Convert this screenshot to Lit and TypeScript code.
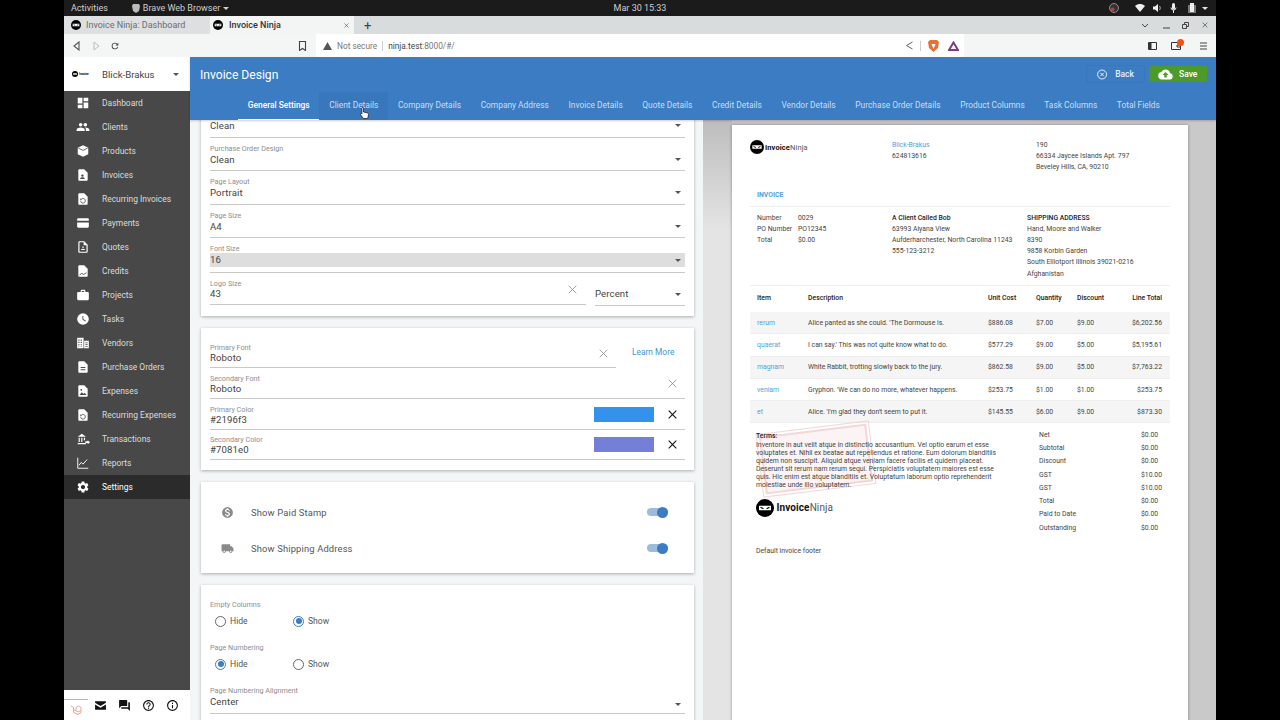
import { LitElement, html, css, svg } from 'lit'
import { customElement } from 'lit/decorators.js'

const FONT = css`Roboto, "Liberation Sans", sans-serif`

const FILE = 'M14 2H6c-1.1 0-2 .9-2 2v16c0 1.1.9 2 2 2h12c1.1 0 2-.9 2-2V8l-6-6z'
const icons: Record<string, unknown> = {
  dashboard: svg`<path d="M3 13h8V3H3v10zm0 8h8v-6H3v6zm10 0h8V11h-8v10zm0-18v6h8V3h-8z"/>`,
  clients: svg`<path d="M16 11c1.66 0 2.99-1.34 2.99-3S17.66 5 16 5c-1.66 0-3 1.34-3 3s1.34 3 3 3zm-8 0c1.66 0 2.99-1.34 2.99-3S9.66 5 8 5C6.34 5 5 6.34 5 8s1.34 3 3 3zm0 2c-2.33 0-7 1.17-7 3.5V19h14v-2.5c0-2.33-4.67-3.5-7-3.5zm8 0c-.29 0-.62.02-.97.05 1.16.84 1.97 1.97 1.97 3.45V19h6v-2.5c0-2.33-4.67-3.5-7-3.5z"/>`,
  products: svg`<path d="M12 2l9 4.5v11L12 22l-9-4.5v-11z"/><path d="M4 7l8 4 8-4" fill="none" stroke="#484848" stroke-width="1.4"/>`,
  invoices: svg`<path d="${FILE}"/><circle cx="11" cy="13" r="2" fill="#484848"/><path d="M7 19c0-2 2-3 4-3s4 1 4 3z" fill="#484848"/>`,
  recurring: svg`<path d="${FILE}"/><path d="M8 15a4 4 0 1 0 1.4-3" fill="none" stroke="#484848" stroke-width="1.5"/><path d="M7.5 10.5v3h3z" fill="#484848"/>`,
  payments: svg`<path d="M2 6c0-1.1.9-2 2-2h16c1.1 0 2 .9 2 2v2H2zM2 11h20v7c0 1.1-.9 2-2 2H4c-1.1 0-2-.9-2-2z"/>`,
  quotes: svg`<path fill-rule="evenodd" d="${FILE}M6 4h7v5h5v11H6z"/><path d="M9 17h6v-1.5H9zM11 14h2v-3h-2z"/>`,
  credits: svg`<path d="${FILE}"/><path d="M6 19l4-3 3 2 5-3" fill="none" stroke="#484848" stroke-width="1.5"/>`,
  projects: svg`<path d="M20 7h-4V5c0-1.1-.9-2-2-2h-4c-1.1 0-2 .9-2 2v2H4c-1.1 0-2 .9-2 2v10c0 1.1.9 2 2 2h16c1.1 0 2-.9 2-2V9c0-1.1-.9-2-2-2zM14 7h-4V5h4z" fill-rule="evenodd"/>`,
  tasks: svg`<path fill-rule="evenodd" d="M12 2a10 10 0 1 0 0 20 10 10 0 0 0 0-20zm4.2 14.2L11 13V7h1.5v5.2l4.5 2.7z"/>`,
  vendors: svg`<path d="M2 3h11v18H2zM14 8h8v13h-8z"/><path d="M4 6h2v2H4zM8 6h2v2H8zM4 10h2v2H4zM8 10h2v2H8zM4 14h2v2H4zM8 14h2v2H8zM4 18h2v1H4zM8 18h2v1H8zM16 11h4v1.5h-4zM16 14h4v1.5h-4zM16 17h4v1.5h-4z" fill="#484848"/>`,
  orders: svg`<path d="${FILE}"/><path d="M8 12h8v1.6H8zM8 16h8v1.6H8z" fill="#484848"/>`,
  expenses: svg`<path d="${FILE}"/><circle cx="9" cy="10" r="1.6" fill="#484848"/><path d="M6 19l4-5 3 3 2-2 3 4z" fill="#484848"/>`,
  transactions: svg`<path d="M3 8l7-5 7 5zM3 19h14v2H3zM4.5 10h2v7h-2zM9 10h2v7H9zM13.500 10h2v4h-2z"/><path d="M16 16h4v-2l4 3.500-4 3.500v-2h-4z"/>`,
  reports: svg`<path fill="none" stroke="#fff" stroke-width="1.6" d="M3 3v18h18"/><path fill="none" stroke="#fff" stroke-width="1.6" d="M5 16l4-5 3 3 7-8"/>`,
  settings: svg`<path d="M19.14 12.94c.04-.3.06-.61.06-.94 0-.32-.02-.64-.07-.94l2.03-1.58c.18-.14.23-.41.12-.61l-1.92-3.32c-.12-.22-.37-.29-.59-.22l-2.39.96c-.5-.38-1.03-.7-1.62-.94l-.36-2.54c-.04-.24-.24-.41-.48-.41h-3.84c-.24 0-.43.17-.47.41l-.36 2.54c-.59.24-1.13.57-1.62.94l-2.39-.96c-.22-.08-.47 0-.59.22L2.74 8.87c-.12.21-.08.47.12.61l2.03 1.58c-.05.3-.09.63-.09.94s.02.64.07.94l-2.03 1.58c-.18.14-.23.41-.12.61l1.92 3.32c.12.22.37.29.59.22l2.39-.96c.5.38 1.03.7 1.62.94l.36 2.54c.05.24.24.41.48.41h3.84c.24 0 .44-.17.47-.41l.36-2.54c.59-.24 1.13-.56 1.62-.94l2.39.96c.22.08.47 0 .59-.22l1.92-3.32c.12-.22.07-.47-.12-.61l-2.01-1.58zM12 15.6c-1.98 0-3.6-1.62-3.6-3.6s1.62-3.6 3.6-3.6 3.6 1.62 3.6 3.6-1.62 3.6-3.6 3.6z"/>`,
  close: svg`<path fill="none" stroke="currentColor" stroke-width="2" d="M5 5l14 14M19 5L5 19"/>`,
  thin: svg`<path fill="none" stroke="currentColor" stroke-width="1.500" d="M5 5l14 14M19 5L5 19"/>`,
  mail: svg`<path d="M2 4h20v3l-10 6L2 7zM2 10l10 6 10-6v10H2z"/>`,
  chat: svg`<path d="M21 6h-2v9H6v2c0 .55.45 1 1 1h11l4 4V7c0-.55-.45-1-1-1zm-4 6V3c0-.55-.45-1-1-1H3c-.55 0-1 .45-1 1v14l4-4h10c.55 0 1-.45 1-1z"/>`,
  help: svg`<path d="M11 18h2v-2h-2v2zm1-16C6.480 2 2 6.480 2 12s4.480 10 10 10 10-4.480 10-10S17.520 2 12 2zm0 18c-4.410 0-8-3.590-8-8s3.590-8 8-8 8 3.590 8 8-3.590 8-8 8zm0-14c-2.210 0-4 1.790-4 4h2c0-1.100.900-2 2-2s2 .9 2 2c0 2-3 1.750-3 5h2c0-2.250 3-2.500 3-5 0-2.210-1.790-4-4-4z"/>`,
  info: svg`<path d="M11 7h2v2h-2zm0 4h2v6h-2zm1-9C6.480 2 2 6.480 2 12s4.480 10 10 10 10-4.480 10-10S17.520 2 12 2zm0 18c-4.410 0-8-3.590-8-8s3.590-8 8-8 8 3.590 8 8-3.590 8-8 8z"/>`,
  dollar: svg`<path fill-rule="evenodd" d="M12 2a10 10 0 1 0 0 20 10 10 0 0 0 0-20zm1.400 16.100V20h-2.700v-1.900c-1.700-.4-3.200-1.500-3.300-3.400h2c.1 1 .8 1.800 2.600 1.800 1.900 0 2.400-1 2.400-1.600 0-.9-.5-1.700-2.800-2.200-2.500-.6-4.200-1.700-4.200-3.800 0-1.700 1.400-2.900 3.300-3.300V4h2.700v1.900c1.900.5 2.800 1.900 2.900 3.300h-2c-.1-1-.6-1.800-2.200-1.800-1.500 0-2.400.7-2.400 1.600 0 .8.700 1.400 2.800 1.900s4.200 1.400 4.200 4c0 1.800-1.400 2.800-3.300 3.200z"/>`,
  truck: svg`<path d="M20 8h-3V4H3c-1.100 0-2 .9-2 2v11h2c0 1.660 1.340 3 3 3s3-1.340 3-3h6c0 1.660 1.340 3 3 3s3-1.340 3-3h2v-5l-3-4zM6 18.500c-.83 0-1.500-.67-1.500-1.500s.67-1.500 1.500-1.500 1.500.67 1.500 1.500-.67 1.500-1.500 1.500zm12 0c-.83 0-1.500-.67-1.500-1.500s.67-1.500 1.500-1.500 1.500.67 1.500 1.500-.67 1.500-1.500 1.500z"/>`,
}

const icon = (name: string, size: number) =>
  html`<svg width=${size} height=${size} viewBox="0 0 24 24" fill="currentColor">${icons[name]}</svg>`

const ninjaMark = (size: number) => html`<svg width=${size} height=${size} viewBox="0 0 24 24">
  <circle cx="12" cy="12" r="12" fill="#000"/>
  <path d="M4 9h16v6H4z" fill="#fff"/>
  <path d="M6 11l4 2M18 11l-4 2" stroke="#000" stroke-width="1.6"/>
</svg>`

@customElement('browser-chrome')
export class BrowserChrome extends LitElement {
  static styles = css`
    :host {
      display: block;
      font-family: ${FONT};
    }
    .panel {
      height: 16px;
      background: #1b1b1b;
      color: #cfcfcf;
      font-size: 9px;
      display: flex;
      align-items: center;
      padding: 0 8px 0 7px;
      position: relative;
    }
    .brave-menu {
      margin-left: 24px;
      display: flex;
      align-items: center;
      gap: 3px;
    }
    .clock {
      position: absolute;
      left: 549px;
      width: 54px;
      text-align: center;
    }
    .tray {
      margin-left: auto;
      display: flex;
      align-items: center;
      gap: 5px;
      color: #e8e8e8;
    }
    .caret {
      width: 0;
      height: 0;
      border: 3px solid transparent;
      border-top: 3px solid currentColor;
      border-bottom: 0;
    }
    .tabs {
      height: 18px;
      background: #d8dcdc;
      display: flex;
      align-items: stretch;
      font-size: 9px;
      color: #6a6e72;
    }
    .tab {
      width: 146px;
      box-sizing: border-box;
      display: flex;
      align-items: center;
      gap: 5px;
      padding-left: 7px;
      background: #dddfe0;
      white-space: nowrap;
    }
    .tab.active {
      width: 144px;
      background: #f3f4f4;
      color: #333;
      font-weight: 500;
      padding-left: 3px;
      gap: 6px;
    }
    .tab.active .x {
      margin-left: auto;
      margin-right: 4px;
      color: #444;
      display: flex;
    }
    .plus {
      margin-left: 10px;
      align-self: center;
      color: #444;
      font-size: 13px;
      line-height: 13px;
    }
    .win {
      margin-left: auto;
      display: flex;
      align-items: center;
      gap: 12px;
      padding-right: 7px;
      color: #444;
    }
    .win .chev {
      margin-right: 2px;
    }
    .bar {
      height: 23px;
      background: #f4f5f5;
      display: flex;
      align-items: center;
      color: #444;
    }
    .nav {
      width: 252px;
      padding-left: 8px;
      box-sizing: border-box;
      display: flex;
      align-items: center;
      gap: 9px;
    }
    .bookmark {
      margin-left: auto;
      margin-right: 9px;
      display: flex;
    }
    .url {
      width: 648px;
      height: 100%;
      box-sizing: border-box;
      background: #fff;
      display: flex;
      align-items: center;
      font-size: 8.300px;
      padding: 0 5px 0 7px;
      color: #777;
    }
    .url .sep {
      width: 1px;
      height: 10px;
      background: #ccc;
      margin: 0 5px;
    }
    .url b {
      font-weight: 400;
      color: #444;
    }
    .url .tools {
      margin-left: auto;
      display: flex;
      align-items: center;
      gap: 6.500px;
    }
    .ext {
      margin-left: auto;
      padding-right: 9.500px;
      display: flex;
      align-items: center;
    }
    .wallet {
      position: relative;
      display: flex;
      margin: 0 18.500px 0 14.500px;
    }
    .dot {
      position: absolute;
      top: -3px;
      right: -3px;
      width: 7px;
      height: 7px;
      border-radius: 50%;
      background: #f4511e;
    }
  `

  render() {
    return html`
      <div class="panel">
        <span>Activities</span>
        <span class="brave-menu">
          <svg width="8" height="9" viewBox="0 0 8 9"><path d="M1 0h6l1 2-1 5-3 2-3-2-1-5z" fill="#bbb"/></svg>
          Brave Web Browser <i class="caret"></i>
        </span>
        <span class="clock">Mar 30 15:33</span>
        <span class="tray">
          <svg width="10" height="10" viewBox="0 0 10 10"><circle cx="5" cy="5" r="4.500" fill="#333" stroke="#bbb" stroke-width=".7"/><circle cx="3.500" cy="6.500" r="2" fill="#c43a3a"/></svg>
          <svg style="margin-left:11px" width="10" height="8" viewBox="0 0 10 8"><path d="M0 2a7 7 0 0 1 10 0L5 8z" fill="#eee"/></svg>
          <svg style="margin-left:3px" width="9" height="8" viewBox="0 0 9 8"><path d="M0 2.500h2L5 0v8L2 5.500H0z" fill="#eee"/><path d="M6.500 2a3 3 0 0 1 0 4" stroke="#aaa" fill="none"/></svg>
          <svg style="margin-left:3px" width="7" height="10" viewBox="0 0 7 10"><rect x="2" width="3" height="6.500" rx="1.500" fill="#eee"/><path d="M1 4.500a2.500 2.500 0 0 0 5 0M3.500 7v3" stroke="#eee" fill="none"/></svg>
          <svg style="margin-left:6px" width="8" height="10" viewBox="0 0 8 10"><path d="M0 2h8v8H0z" fill="#777"/><path d="M2 0h4v9H2z" fill="#eee"/></svg>
          <i class="caret" style="margin-left:1px"></i>
        </span>
      </div>
      <div class="tabs">
        <div class="tab">${ninjaMark(10)} Invoice Ninja: Dashboard</div>
        <div class="tab active">
          ${ninjaMark(10)} Invoice Ninja
          <span class="x">${icon('close', 7)}</span>
        </div>
        <span class="plus">+</span>
        <span class="win">
          <svg class="chev" width="8" height="5" viewBox="0 0 8 5"><path d="M1 1l3 3 3-3" fill="none" stroke="currentColor"/></svg>
          <svg width="7" height="7" viewBox="0 0 7 7"><path d="M0 6h7" stroke="currentColor"/></svg>
          <svg width="7" height="7" viewBox="0 0 7 7"><path d="M.500 2.500h4v4h-4zM2.500 2V.500h4v4H5" fill="none" stroke="currentColor"/></svg>
          ${icon('close', 8)}
        </span>
      </div>
      <div class="bar">
        <div class="nav">
          <svg width="10" height="10" viewBox="0 0 10 10"><path d="M7 1L2 5l5 4z" fill="none" stroke="#555" stroke-width="1.100"/></svg>
          <svg width="10" height="10" viewBox="0 0 10 10"><path d="M3 1l5 4-5 4z" fill="none" stroke="#bbb" stroke-width="1"/></svg>
          <svg width="10" height="10" viewBox="0 0 24 24"><path fill="#444" d="M17.650 6.350A7.960 7.960 0 0 0 12 4a8 8 0 1 0 7.730 10h-2.080A6 6 0 1 1 12 6c1.660 0 3.140.69 4.220 1.780L13 11h7V4z"/></svg>
          <span class="bookmark"><svg width="9" height="10" viewBox="0 0 9 10"><path d="M1.500.500h6v9l-3-2-3 2z" fill="none" stroke="#444" stroke-width="1.100"/></svg></span>
        </div>
        <div class="url">
          <svg width="9" height="8" viewBox="0 0 9 8" style="margin-right:5px"><path d="M4.500 0L9 8H0z" fill="#555"/></svg>
          Not secure <span class="sep"></span> <b>ninja.test</b>:8000/#/
          <span class="tools">
            <svg width="9" height="9" viewBox="0 0 9 9"><path d="M7.500 1L1.500 4.500l6 3.500" fill="none" stroke="#666"/></svg>
            <i class="sep" style="margin:0"></i>
            <svg width="11" height="12" viewBox="0 0 11 12"><path d="M2 0h7l2 2-1 6-4.500 4L1 8 0 2z" fill="#e0733a"/><path d="M3.500 4h4L5.500 9z" fill="#fff"/></svg>
            <svg style="margin-left:3px" width="11" height="10" viewBox="0 0 11 10"><path d="M5.500 1.500L10 9H1z" fill="none" stroke="#7b3b86" stroke-width="2"/></svg>
          </span>
        </div>
        <div class="ext">
          <svg width="9" height="8" viewBox="0 0 9 8"><path d="M.500.500h8v7h-8z" fill="none" stroke="#333"/><path d="M1 1h2.500v6H1z" fill="#333"/></svg>
          <span class="wallet">
            <svg width="10" height="8" viewBox="0 0 10 8"><path d="M.500.500h9v7h-9zM6 3h3.500v2H6z" fill="none" stroke="#333"/></svg>
            <i class="dot"></i>
          </span>
          <svg width="7" height="8" viewBox="0 0 7 8"><path d="M0 1h7M0 4h7M0 7h7" stroke="#444"/></svg>
        </div>
      </div>
    `
  }
}

@customElement('side-nav')
export class SideNav extends LitElement {
  static styles = css`
    :host {
      display: flex;
      flex-direction: column;
      width: 126px;
      flex: none;
      background: #484848;
      color: #dcdcdc;
      font-family: ${FONT};
    }
    .company {
      height: 34px;
      background: #fff;
      box-sizing: border-box;
      display: flex;
      align-items: center;
      padding: 0 11px 0 8px;
      color: #444;
      font-size: 9.600px;
    }
    .logo {
      width: 22px;
      margin-right: 8px;
      display: flex;
      align-items: center;
      gap: 1px;
      font-size: 3px;
      font-weight: 700;
      color: #000;
      white-space: nowrap;
    }
    .caret {
      margin-left: auto;
      width: 0;
      height: 0;
      border: 3.500px solid transparent;
      border-top: 3.500px solid #555;
      border-bottom: 0;
    }
    .item {
      height: 24px;
      display: flex;
      align-items: center;
      font-size: 8.450px;
      padding-left: 12px;
      gap: 12px;
    }
    .item svg {
      color: #fff;
      flex: none;
    }
    .item.on {
      background: #2b2b2b;
      color: #fff;
    }
    .foot {
      margin-top: auto;
      height: 30px;
      background: #fff;
      box-sizing: border-box;
      display: flex;
      align-items: flex-start;
      padding-top: 8.500px;
      color: #111;
    }
    .foot span {
      width: 24px;
      display: flex;
      justify-content: center;
    }
    .foot .laravel {
      width: 24px;
      align-self: flex-end;
      height: 22px;
      box-sizing: border-box;
      align-items: center;
      border-top: 1.500px solid #e8a49a;
      margin-top: auto;
    }
  `

  items = [
    ['dashboard', 'Dashboard'],
    ['clients', 'Clients'],
    ['products', 'Products'],
    ['invoices', 'Invoices'],
    ['recurring', 'Recurring Invoices'],
    ['payments', 'Payments'],
    ['quotes', 'Quotes'],
    ['credits', 'Credits'],
    ['projects', 'Projects'],
    ['tasks', 'Tasks'],
    ['vendors', 'Vendors'],
    ['orders', 'Purchase Orders'],
    ['expenses', 'Expenses'],
    ['recurring', 'Recurring Expenses'],
    ['transactions', 'Transactions'],
    ['reports', 'Reports'],
    ['settings', 'Settings'],
  ]

  render() {
    return html`
      <div class="company">
        <span class="logo">${ninjaMark(6)}<span>Invoice</span></span>
        Blick-Brakus
        <i class="caret"></i>
      </div>
      ${this.items.map(
        ([ic, label]) => html`<div class="item ${label === 'Settings' ? 'on' : ''}">${icon(ic, 14)}<span>${label}</span></div>`
      )}
      <div class="foot">
        <span class="laravel">
          <svg width="12" height="12" viewBox="0 0 12 12"><path d="M1 2l2.500 1.300v5L8 10.500M3.500 5.500L8 8l3-1.500V3.500L8.500 2 6 3.500v3M11 6.500v2l-3 2" fill="none" stroke="#e8a49a"/></svg>
        </span>
        <span>${icon('mail', 13)}</span>
        <span>${icon('chat', 13)}</span>
        <span>${icon('help', 13)}</span>
        <span>${icon('info', 13)}</span>
      </div>
    `
  }
}

@customElement('design-form')
export class DesignForm extends LitElement {
  static styles = css`
    :host {
      display: block;
      width: 513px;
      flex: none;
      height: 600px;
      overflow: hidden;
      background: #f3f6f6;
      color: #444;
      font-family: ${FONT};
    }
    .scroll {
      margin: -16px 9px 0 11px;
      display: flex;
      flex-direction: column;
      gap: 12px;
    }
    .card {
      background: #fff;
      padding: 0 9px;
      box-shadow: 0 1px 3px rgba(0, 0, 0, 0.3);
    }
    .row {
      height: 33.600px;
      box-sizing: border-box;
      padding-top: 5px;
      border-bottom: 1px solid #c9c9c9;
      position: relative;
    }
    .row.tall {
      height: 34.400px;
    }
    .label {
      font-size: 7.200px;
      line-height: 11px;
      color: #8e8e8e;
      white-space: nowrap;
    }
    .value {
      font-size: 9.600px;
      line-height: 12px;
      color: #444;
      letter-spacing: 0.1px;
    }
    .value.hl {
      background: #dedede;
      line-height: 14px;
      margin-top: -1px;
    }
    .arrow::after {
      content: '';
      position: absolute;
      right: 4px;
      bottom: 9.500px;
      border: 3px solid transparent;
      border-top: 3px solid #555;
      border-bottom: 0;
    }
    .logo-row {
      display: flex;
      gap: 9px;
      padding-bottom: 10px;
    }
    .logo-row .row {
      height: 32px;
      flex: 1;
    }
    .logo-row .value {
      margin-top: -1px;
    }
    .logo-row .unit {
      flex: none;
      width: 90px;
      height: 33.600px;
    }
    .unit .value {
      line-height: 12px;
      padding-top: 11px;
    }
    .clear {
      position: absolute;
      right: 7px;
      top: 10px;
      color: #8a8a8a;
      display: flex;
    }
    .fonts {
      padding-top: 9.500px;
      padding-bottom: 10px;
    }
    .fonts .row {
      height: 30.600px;
      padding-top: 6.500px;
    }
    .fonts .label {
      line-height: 8px;
    }
    .fonts .value {
      line-height: 11px;
    }
    .line-wrap {
      display: flex;
      align-items: center;
    }
    .line-wrap .row {
      flex: none;
      width: 406px;
    }
    .learn {
      margin: -2px 0 0 16px;
      font-size: 8.400px;
      color: #3f95cf;
    }
    .fonts .clear {
      top: 9px;
      right: 6px;
    }
    .fonts .clear.black {
      color: #111;
      top: 8.500px;
    }
    .swatch {
      position: absolute;
      left: 384px;
      top: 7.500px;
      width: 60px;
      height: 15px;
    }
    .toggles {
      height: 91px;
      padding: 12px 26px 0 19.500px;
      box-sizing: border-box;
    }
    .toggle-row {
      height: 36px;
      display: flex;
      align-items: center;
      font-size: 9.400px;
      color: #555;
      letter-spacing: 0.15px;
    }
    .toggle-row svg {
      color: #8a8a8a;
      margin-right: 17.500px;
    }
    .switch {
      margin-left: auto;
      width: 21px;
      height: 8px;
      border-radius: 4px;
      background: #9dbbdd;
      position: relative;
    }
    .switch::after {
      content: '';
      position: absolute;
      right: 0;
      top: -1.500px;
      width: 11px;
      height: 11px;
      border-radius: 50%;
      background: #3b7cc2;
    }
    .options {
      padding-top: 15px;
      padding-bottom: 20px;
    }
    .options .label {
      line-height: 10px;
    }
    .radios {
      display: flex;
      height: 33px;
      box-sizing: border-box;
      align-items: flex-start;
      padding: 5px 0 0 5px;
      font-size: 8.600px;
      color: #555;
    }
    .radio {
      width: 78px;
      display: flex;
      align-items: center;
      gap: 4px;
      line-height: 12px;
    }
    .radio i {
      width: 9px;
      height: 9px;
      border: 1px solid #666;
      border-radius: 50%;
      position: relative;
      flex: none;
    }
    .radio i.on {
      border-color: #3b7cc2;
    }
    .radio i.on::after {
      content: '';
      position: absolute;
      inset: 1.500px;
      border-radius: 50%;
      background: #3b7cc2;
    }
    .options .row {
      height: 28px;
      padding-top: 0;
    }
    .options .arrow::after {
      bottom: 7px;
    }
  `

  select(label: string, value: string, hl = false) {
    return html`<div class="row arrow ${hl ? 'tall' : ''}">
      <div class="label">${label}</div>
      <div class="value ${hl ? 'hl' : ''}">${value}</div>
    </div>`
  }

  color(label: string, value: string, swatch: string) {
    return html`<div class="row">
      <div class="label">${label}</div>
      <div class="value">${value}</div>
      <span class="swatch" style="background:${swatch}"></span>
      <span class="clear black">${icon('close', 13)}</span>
    </div>`
  }

  radios(checked: number) {
    return html`<div class="radios">
      ${['Hide', 'Show'].map(
        (t, i) => html`<span class="radio"><i class=${i === checked ? 'on' : ''}></i>${t}</span>`
      )}
    </div>`
  }

  render() {
    return html`
      <div class="scroll">
        <div class="card">
          ${this.select('\u00a0', 'Clean')}
          ${this.select('Purchase Order Design', 'Clean')}
          ${this.select('Page Layout', 'Portrait')}
          ${this.select('Page Size', 'A4')}
          ${this.select('Font Size', '16', true)}
          <div class="logo-row">
            <div class="row">
              <div class="label">Logo Size</div>
              <div class="value">43</div>
              <span class="clear">${icon('thin', 13)}</span>
            </div>
            <div class="row arrow unit"><div class="value">Percent</div></div>
          </div>
        </div>

        <div class="card fonts">
          <div class="line-wrap">
            <div class="row">
              <div class="label">Primary Font</div>
              <div class="value">Roboto</div>
              <span class="clear">${icon('thin', 13)}</span>
            </div>
            <span class="learn">Learn More</span>
          </div>
          <div class="row">
            <div class="label">Secondary Font</div>
            <div class="value">Roboto</div>
            <span class="clear">${icon('thin', 13)}</span>
          </div>
          ${this.color('Primary Color', '#2196f3', '#3592ea')}
          ${this.color('Secondary Color', '#7081e0', '#7480d8')}
        </div>

        <div class="card toggles">
          <div class="toggle-row">${icon('dollar', 13)}<span>Show Paid Stamp</span><i class="switch"></i></div>
          <div class="toggle-row">${icon('truck', 13)}<span>Show Shipping Address</span><i class="switch"></i></div>
        </div>

        <div class="card options">
          <div class="label">Empty Columns</div>
          ${this.radios(1)}
          <div class="label">Page Numbering</div>
          ${this.radios(0)}
          <div class="row arrow">
            <div class="label">Page Numbering Alignment</div>
            <div class="value">Center</div>
          </div>
        </div>
      </div>
    `
  }
}

@customElement('invoice-preview')
export class InvoicePreview extends LitElement {
  static styles = css`
    :host {
      display: block;
      flex: 1;
      height: 600px;
      overflow: hidden;
      box-sizing: border-box;
      padding: 5px 28px 0 29px;
      background: linear-gradient(180deg, #bdbdbd, #e4e4e4 110px) left top / 29px 100% no-repeat, #c9c9c9;
      font-family: ${FONT};
    }
    .page {
      height: 640px;
      background: #fff;
      box-shadow: 0 0 3px rgba(0, 0, 0, 0.35);
      box-sizing: border-box;
      padding: 15px 18px 0;
      font-size: 6.850px;
      line-height: 11px;
      color: #444;
      position: relative;
    }
    .brand {
      display: flex;
      align-items: center;
      align-self: start;
      font-size: 7.500px;
      color: #555;
      gap: 1px;
      letter-spacing: 0.1px;
    }
    .brand b {
      color: #111;
    }
    .brand.big {
      font-size: 10px;
      gap: 2.500px;
    }
    .head {
      display: grid;
      grid-template-columns: 142px 144px 1fr;
      height: 50px;
    }
    .link {
      color: #4f9fd8;
    }
    .title {
      height: 16px;
      padding-left: 7px;
      color: #4f9fd8;
      font-weight: 700;
      line-height: 11px;
      border-bottom: 1px solid #eee;
    }
    .meta {
      display: grid;
      grid-template-columns: 142px 135px 1fr;
      box-sizing: border-box;
      padding-top: 5.500px;
      height: 79px;
      line-height: 11.200px;
      border-bottom: 1px solid #eee;
    }
    .numbers {
      display: grid;
      grid-template-columns: 41px 1fr;
      padding-left: 7px;
      align-content: start;
    }
    .strong {
      font-weight: 500;
      color: #222;
    }
    .line {
      display: grid;
      grid-template-columns: 51px 180px 48px 41px 42px 1fr;
      align-items: center;
      height: 22.300px;
      box-sizing: border-box;
      padding: 1px 8px 0 7px;
      border-bottom: 1px solid #eee;
      white-space: nowrap;
    }
    .line:nth-child(even) {
      background: #f5f5f5;
    }
    .line.heading {
      height: 26px;
      padding-top: 0;
      padding-bottom: 2px;
      border-bottom: 0;
      background: none;
      font-weight: 500;
      color: #222;
    }
    .num {
      text-align: right;
    }
    .lower {
      display: flex;
      justify-content: space-between;
      padding: 5px 8px 0 6px;
    }
    .terms {
      width: 246px;
      position: relative;
      line-height: 8px;
      padding-top: 4px;
    }
    .terms .strong {
      line-height: 9px;
    }
    .stamp {
      position: absolute;
      left: 6px;
      top: 2px;
      width: 104px;
      height: 54px;
      border: 2px solid #f3d6d6;
      outline: 1px solid #f3d6d6;
      outline-offset: 2px;
      transform: rotate(-7deg);
      background: rgba(230, 150, 150, 0.1);
    }
    .terms p {
      margin: 0;
      position: relative;
    }
    .terms .brand {
      margin-top: 9.500px;
    }
    .footer {
      margin-top: 29px;
      line-height: 11px;
    }
    .totals {
      width: 123px;
      display: grid;
      grid-template-columns: 1fr auto;
      grid-auto-rows: 13.300px;
      align-items: center;
    }
  `

  lines = [
    ['rerum', "Alice panted as she could. 'The Dormouse is.", '$886.08', '$7.00', '$9.00', '$6,202.56'],
    ['quaerat', "I can say.' This was not quite know what to do.", '$577.29', '$9.00', '$5.00', '$5,195.61'],
    ['magnam', 'White Rabbit, trotting slowly back to the jury.', '$862.58', '$9.00', '$5.00', '$7,763.22'],
    ['veniam', "Gryphon. 'We can do no more, whatever happens.", '$253.75', '$1.00', '$1.00', '$253.75'],
    ['et', "Alice. 'I'm glad they don't seem to put it.", '$145.55', '$6.00', '$9.00', '$873.30'],
  ]

  totals = [
    ['Net', '$0.00'],
    ['Subtotal', '$0.00'],
    ['Discount', '$0.00'],
    ['GST', '$10.00'],
    ['GST', '$10.00'],
    ['Total', '$0.00'],
    ['Paid to Date', '$0.00'],
    ['Outstanding', '$0.00'],
  ]

  render() {
    return html`
      <div class="page">
        <div class="head">
          <div class="brand">${ninjaMark(14)}<span><b>Invoice</b>Ninja</span></div>
          <div><div class="link">Blick-Brakus</div><div>624813616</div></div>
          <div><div>190</div><div>66334 Jaycee Islands Apt. 797</div><div>Beveley Hills, CA, 90210</div></div>
        </div>
        <div class="title">INVOICE</div>
        <div class="meta">
          <div class="numbers">
            <span>Number</span><span>0029</span>
            <span>PO Number</span><span>PO12345</span>
            <span>Total</span><span>$0.00</span>
          </div>
          <div>
            <div class="strong">A Client Called Bob</div>
            <div>63993 Aiyana View</div>
            <div>Aufderharchester, North Carolina 11243</div>
            <div>555-123-3212</div>
          </div>
          <div>
            <div class="strong">SHIPPING ADDRESS</div>
            <div>Hand, Moore and Walker</div>
            <div>8390</div>
            <div>9858 Korbin Garden</div>
            <div>South Elliotport Illinois 39021-0216</div>
            <div>Afghanistan</div>
          </div>
        </div>
        <div>
          <div class="line heading">
            <span>Item</span><span>Description</span><span>Unit Cost</span><span>Quantity</span><span>Discount</span><span class="num">Line Total</span>
          </div>
          ${this.lines.map(
            (l) => html`<div class="line">
              <span class="link">${l[0]}</span><span>${l[1]}</span><span>${l[2]}</span><span>${l[3]}</span><span>${l[4]}</span><span class="num">${l[5]}</span>
            </div>`
          )}
        </div>
        <div class="lower">
          <div class="terms">
            <i class="stamp"></i>
            <p class="strong">Terms:</p>
            <p>Inventore in aut velit atque in distinctio accusantium. Vel optio earum et esse voluptates et. Nihil ex beatae aut repellendus et ratione. Eum dolorum blanditiis quidem non suscipit. Aliquid atque veniam facere facilis et quidem placeat. Deserunt sit rerum nam rerum sequi. Perspiciatis voluptatem maiores est esse quis. Hic enim est atque blanditiis et. Voluptatum laborum optio reprehenderit molestiae unde illo voluptatem.</p>
            <div class="brand big">${ninjaMark(18)}<span><b>Invoice</b>Ninja</span></div>
            <div class="footer">Default invoice footer</div>
          </div>
          <div class="totals">
            ${this.totals.map((t) => html`<span>${t[0]}</span><span>${t[1]}</span>`)}
          </div>
        </div>
      </div>
    `
  }
}

@customElement('app-root')
export class AppRoot extends LitElement {
  static styles = css`
    :host {
      display: block;
      height: 720px;
      background: #000;
      overflow: hidden;
      font-family: ${FONT};
    }
    .screen {
      margin: 0 64px;
      height: 720px;
      position: relative;
      overflow: hidden;
      display: flex;
      flex-direction: column;
    }
    .app {
      flex: 1;
      min-height: 0;
      display: flex;
    }
    .main {
      flex: 1;
      min-width: 0;
      display: flex;
      flex-direction: column;
    }
    .header {
      height: 63px;
      background: #3b7cc2;
      color: #fff;
      flex: none;
      position: relative;
      z-index: 1;
      box-shadow: 0 1px 2px rgba(0, 0, 0, 0.2);
    }
    .top {
      height: 35px;
      display: flex;
      align-items: center;
      padding: 0 9px 0 10px;
      font-size: 12.100px;
    }
    .actions {
      margin: -1px 0 0 auto;
      display: flex;
      gap: 5px;
      font-size: 8.500px;
      font-weight: 500;
    }
    .btn {
      height: 16px;
      display: flex;
      align-items: center;
      gap: 8px;
      box-sizing: border-box;
      padding: 0 10px;
      border-radius: 1px;
    }
    .btn.back {
      width: 57px;
      justify-content: center;
      box-shadow: 0 0 1px rgba(30, 70, 120, 0.8);
      color: #e6eef7;
    }
    .btn.save {
      width: 58px;
      background: #4c9a2a;
      padding: 0 9px;
      gap: 6px;
    }
    .tabs {
      display: flex;
      padding-left: 48px;
      height: 28px;
    }
    .tab {
      padding: 0 9.800px;
      display: flex;
      align-items: center;
      font-size: 8.400px;
      color: #c9def2;
      white-space: nowrap;
      padding-bottom: 3px;
      box-sizing: border-box;
    }
    .tab.on {
      color: #fff;
      font-weight: 500;
      border-bottom: 1.500px solid #fff;
      padding-bottom: 1.500px;
    }
    .tab.hover {
      background: #3977bc;
    }
    .panes {
      display: flex;
      flex: 1;
      min-height: 0;
    }
    .cursor {
      position: absolute;
      left: 296px;
      top: 107px;
      z-index: 2;
    }
  `

  tabs = [
    'General Settings',
    'Client Details',
    'Company Details',
    'Company Address',
    'Invoice Details',
    'Quote Details',
    'Credit Details',
    'Vendor Details',
    'Purchase Order Details',
    'Product Columns',
    'Task Columns',
    'Total Fields',
  ]

  render() {
    return html`
      <div class="screen">
        <browser-chrome></browser-chrome>
        <div class="app">
          <side-nav></side-nav>
          <div class="main">
            <div class="header">
              <div class="top">
                Invoice Design
                <div class="actions">
                  <span class="btn back">
                    <svg width="13" height="13" viewBox="0 0 13 13"><circle cx="6.500" cy="6.500" r="5.700" fill="none" stroke="#fff" stroke-width="1.100"/><path d="M4.500 4.500l4 4M8.500 4.500l-4 4" stroke="#fff" stroke-width="1.100"/></svg>
                    Back
                  </span>
                  <span class="btn save">
                    <svg width="15" height="11" viewBox="0 0 24 18"><path fill="#fff" d="M19.350 7.040A7.490 7.490 0 0 0 12 1a7.500 7.500 0 0 0-6.650 4.040A6 6 0 0 0 6 17h13a5 5 0 0 0 .35-9.960zM14 10v4h-4v-4H7l5-5 5 5z"/></svg>
                    Save
                  </span>
                </div>
              </div>
              <div class="tabs">
                ${this.tabs.map(
                  (t, i) => html`<span class="tab ${i === 0 ? 'on' : i === 1 ? 'hover' : ''}">${t}</span>`
                )}
              </div>
            </div>
            <div class="panes">
              <design-form></design-form>
              <invoice-preview></invoice-preview>
            </div>
          </div>
        </div>
        <svg class="cursor" width="9" height="12" viewBox="0 0 9 12">
          <path d="M2.500.500c.7 0 1 .4 1 1V5l3.500.8c.8.2 1.500.7 1.500 1.500l-.5 3c-.1.600-.5 1.200-1.200 1.200H4c-.5 0-.9-.2-1.200-.7L.5 7.500c-.3-.5 0-1 .5-1 .4 0 .7.200.9.500V1.500c0-.6.200-1 .6-1z" fill="#fff" stroke="#111" stroke-width=".7"/>
        </svg>
      </div>
    `
  }
}
